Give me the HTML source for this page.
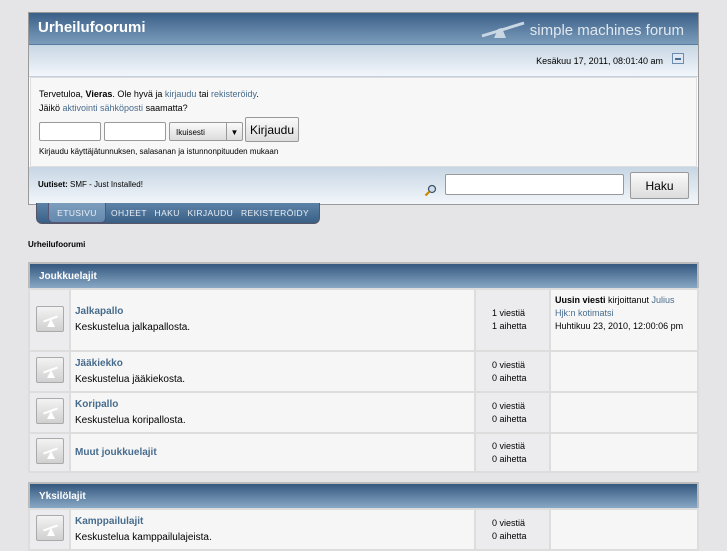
<!DOCTYPE html>
<html><head><meta charset="utf-8"><style>
*{margin:0;padding:0;box-sizing:border-box}
body{width:727px;height:545px;overflow:hidden;background:#e5e5e8;font-family:"Liberation Sans",sans-serif;font-size:9px;color:#000;position:relative}
a{color:#476c8e;text-decoration:none}
.abs{position:absolute}
#hdr{left:28px;top:12px;width:671px;height:193px;border:1px solid #9a9a9a;background:#fff}
#title{left:0;top:0;width:669px;height:32px;background:linear-gradient(#3b6088,#7c9cbb);color:#fff;font-size:15px;font-weight:bold;padding:6px 9px;border-bottom:1px solid #567b9f}
#smf{right:14px;top:7px;color:#e0e8f0;font-size:15px;font-weight:normal}
#date{left:0;top:32px;width:669px;height:32px;background:linear-gradient(#c7d6e4,#f2f6fa);border-bottom:1px solid #c0cfdd;text-align:right;padding:11px 35px 0 0;font-size:9px}
#login{left:1px;top:64px;width:667px;height:90px;background:#f7f7f7;border:1px solid #ddd;padding:9px 8px;line-height:14px}
#news{left:0;top:154px;width:669px;height:37px;background:linear-gradient(#c7d6e4,#f2f6fa);padding:13px 9px;font-size:8px;font-weight:bold}
input.t{position:absolute;height:19px;border:1px solid #999;background:#fff;border-radius:2px}
.btn{position:absolute;border:1px solid #999;background:linear-gradient(#fafafa,#dcdcdc);border-radius:2px;text-align:center}
#tabs{left:36px;top:203px;width:284px;height:21px;background:linear-gradient(#5d83a8,#3a5f86);border:1px solid #556;border-top:none;border-radius:0 0 6px 6px;color:#e8eef5;font-size:8.5px;padding:5px 0 0 0;letter-spacing:.4px}
table{position:absolute;border-collapse:collapse;left:28px;width:671px;border:2px solid #bbb;background:#fff}
td{border:2px solid #ddd;background:#f6f6f6;vertical-align:middle;font-size:10px}
.ch{background:linear-gradient(#34587f,#89a8c5);color:#fff;font-weight:bold;font-size:10px;height:26px;padding-left:9px;border:1px solid #bbb}
.ic{width:41px;text-align:center;background:#ececee}
.ib{display:inline-block;width:28px;height:26px;border:1px solid #aaa;background:linear-gradient(#f3f3f3,#d0d0d0);border-radius:2px;position:relative}
.ib:after{content:"";position:absolute;left:6px;top:11px;width:15px;height:2px;background:#fff;transform:rotate(-20deg)}
.ib:before{content:"";position:absolute;left:10px;top:12px;border-left:4px solid transparent;border-right:4px solid transparent;border-bottom:8px solid #fff}
.nm{padding-left:4px;line-height:16px}
.nm a{font-weight:bold;font-size:10px}
.st{width:75px;background:#ececee;font-size:9px;line-height:13px;padding-left:16px}
.ls{width:148px;font-size:9px;line-height:13px;padding:0 4px}
</style></head><body>
<div id="hdr" class="abs">
 <div id="title" class="abs">Urheilufoorumi
  <span id="smf" class="abs"><svg width="46" height="18" style="vertical-align:-3px;margin-right:4px" viewBox="0 0 46 18"><path d="M2 16 L44 3" stroke="#c9d6e3" stroke-width="3"/><path d="M18 9 L14 18 L26 18 L22 8Z" fill="#c9d6e3"/></svg>simple machines forum</span></div>
 <div id="date" class="abs">Kesäkuu 17, 2011, 08:01:40 am<span class="abs" style="right:14px;top:8px;width:12px;height:11px;border:1px solid #6a8cb0;background:#dfe8f2"><span class="abs" style="left:2px;top:4px;width:6px;height:2px;background:#4a6d94"></span></span></div>
 <div id="login" class="abs">Tervetuloa, <b>Vieras</b>. Ole hyvä ja <a>kirjaudu</a> tai <a>rekisteröidy</a>.<br>Jäikö <a>aktivointi sähköposti</a> saamatta?
  <input class="t" style="left:8px;top:44px;width:62px"><input class="t" style="left:73px;top:44px;width:62px">
  <div class="btn" style="left:138px;top:44px;width:74px;height:19px;font-size:8px;text-align:left;padding:3px 6px">Ikuisesti<span class="abs" style="right:0;top:0;width:16px;height:17px;border-left:1px solid #999;font-size:8px;text-align:center;padding-top:3px">▼</span></div>
  <div class="btn" style="left:214px;top:39px;width:54px;height:25px;font-size:12px;padding-top:5px">Kirjaudu</div>
  <div class="abs" style="left:8px;top:67px;font-size:8px">Kirjaudu käyttäjätunnuksen, salasanan ja istunnonpituuden mukaan</div>
 </div>
 <div id="news" class="abs">Uutiset: <span style="font-weight:normal">SMF - Just Installed!</span>
  <svg class="abs" style="left:395px;top:17px" width="13" height="13" viewBox="0 0 13 13"><circle cx="8" cy="5" r="3.5" fill="#cde" stroke="#456" stroke-width="1.3"/><path d="M5.5 7.5 L1.5 11.5" stroke="#c80" stroke-width="2.2"/></svg>
  <input class="t" style="position:fixed;width:179px;height:21px;left:445px;top:174px">
  <div class="btn" style="left:601px;top:5px;width:59px;height:27px;font-size:12px;font-weight:normal;padding-top:6px">Haku</div>
 </div>
</div>
<div id="tabs" class="abs"><span class="abs" style="left:11px;top:0;width:58px;height:20px;background:linear-gradient(#7d9dbc,#6389ae);border:1px solid #557;border-top:none;border-radius:0 0 5px 5px;text-align:center;padding-top:5px">ETUSIVU</span><span style="margin-left:74px;word-spacing:5px">OHJEET HAKU KIRJAUDU REKISTERÖIDY</span></div>
<div class="abs" style="left:28px;top:240px;font-size:8px;font-weight:bold">Urheilufoorumi</div>
<table style="top:262px">
<tr><td colspan="4" class="ch">Joukkuelajit</td></tr>
<tr style="height:62px"><td class="ic"><span class="ib"></span></td><td class="nm"><a>Jalkapallo</a><br>Keskustelua jalkapallosta.</td><td class="st">1 viestiä<br>1 aihetta</td><td class="ls" style="vertical-align:top;padding-top:4px;padding-right:10px"><b>Uusin viesti</b> kirjoittanut <a>Julius</a><br><a>Hjk:n kotimatsi</a><br>Huhtikuu 23, 2010, 12:00:06 pm</td></tr>
<tr style="height:41px"><td class="ic"><span class="ib"></span></td><td class="nm"><a>Jääkiekko</a><br>Keskustelua jääkiekosta.</td><td class="st">0 viestiä<br>0 aihetta</td><td class="ls"></td></tr>
<tr style="height:41px"><td class="ic"><span class="ib"></span></td><td class="nm"><a>Koripallo</a><br>Keskustelua koripallosta.</td><td class="st">0 viestiä<br>0 aihetta</td><td class="ls"></td></tr>
<tr style="height:39px"><td class="ic"><span class="ib"></span></td><td class="nm"><a>Muut joukkuelajit</a></td><td class="st">0 viestiä<br>0 aihetta</td><td class="ls"></td></tr>
</table>
<table style="top:482px">
<tr><td colspan="4" class="ch">Yksilölajit</td></tr>
<tr style="height:41px"><td class="ic"><span class="ib"></span></td><td class="nm"><a>Kamppailulajit</a><br>Keskustelua kamppailulajeista.</td><td class="st">0 viestiä<br>0 aihetta</td><td class="ls"></td></tr>
</table>
</body></html>
